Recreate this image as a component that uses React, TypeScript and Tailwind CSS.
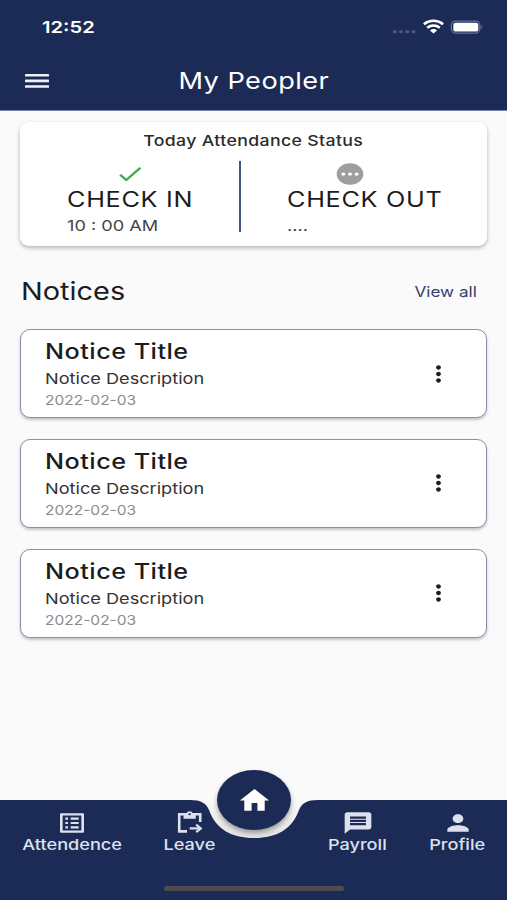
import type { ReactNode } from "react";
import {
    MdCheck,
    MdHome,
    MdListAlt,
    MdMessage,
    MdMoreVert,
    MdPending,
    MdPerson,
} from "react-icons/md";

type Notice = {
    id: number;
    title: string;
    description: string;
    date: string;
};

const notices: Notice[] = [
    { id: 1, title: "Notice Title", description: "Notice Description", date: "2022-02-03" },
    { id: 2, title: "Notice Title", description: "Notice Description", date: "2022-02-03" },
    { id: 3, title: "Notice Title", description: "Notice Description", date: "2022-02-03" },
];

// Wide text, the whole app uses a stretched face
const Wide = ({ className = "", children }: { className?: string; children: ReactNode }) => (
    <span className={`inline-block whitespace-nowrap ${className}`}>{children}</span>
);

const MenuIcon = () => (
    <svg width="24" height="14" viewBox="0 0 24 14" fill="#eef0f8">
        <rect width="24" height="2.6" y="0" rx="0.5" />
        <rect width="24" height="2.6" y="5.6" rx="0.5" />
        <rect width="24" height="2.6" y="11.2" rx="0.5" />
    </svg>
);

const LeaveIcon = () => (
    <svg width="26" height="26" viewBox="0 0 26 26" fill="none">
        <path d="M10 21.4H2.2V4.2H23.2V12" stroke="currentColor" strokeWidth="2.6" />
        <path d="M6.5 3.4H9.6C10 0.4 15.2 0.4 15.6 3.4H18.8V8.7H6.5Z" fill="currentColor" />
        <ellipse cx="12.6" cy="4.2" rx="1.3" ry="1" fill="#1c2b56" />
        <path d="M12.6 18.4H23" stroke="currentColor" strokeWidth="2.2" />
        <path d="M19.2 14.6L23.8 18.4L19.2 22.2" stroke="currentColor" strokeWidth="2.2" />
    </svg>
);

const StatusBar = () => (
    <div className="flex h-[54px] items-center justify-between pl-[42px] pr-[25px] text-white">
        <Wide className="origin-left scale-x-[1.22] text-[16.5px] font-semibold">12:52</Wide>
        <svg width="90" height="18" viewBox="0 0 90 18" fill="none">
            <g fill="#4b5880">
                <ellipse cx="3" cy="13.7" rx="2.1" ry="1.8" />
                <ellipse cx="9" cy="13.7" rx="2.1" ry="1.8" />
                <ellipse cx="15.2" cy="13.7" rx="2.1" ry="1.8" />
                <ellipse cx="21.4" cy="13.7" rx="2.1" ry="1.8" />
            </g>
            <g stroke="#fff" strokeWidth="2.7">
                <path d="M31.9 6.2C37.5 1.6 45.5 1.6 51.1 6.2" />
                <path d="M35.2 9.8C39 6.9 44 6.9 47.8 9.8" />
            </g>
            <path d="M38 12.4C40 10.6 43 10.6 45 12.4L41.5 15.4Z" fill="#fff" />
            <rect x="59.4" y="3.1" width="28.4" height="12" rx="4" stroke="#66719a" strokeWidth="1.2" />
            <rect x="61.3" y="4.8" width="25" height="8.8" rx="2.2" fill="#fff" />
            <path d="M88.9 7.2V11C90.2 10.5 90.2 7.7 88.9 7.2Z" fill="#8088a8" />
        </svg>
    </div>
);

const Header = () => (
    <header className="h-[111px] border-b border-[#7a81a5] bg-[#1c2b56]">
        <StatusBar />
        <div className="grid h-[54px] grid-cols-[74px_1fr_74px] items-center text-white">
            <button type="button" className="pl-[25px]">
                <MenuIcon />
            </button>
            <h1 className="text-center text-[23px] leading-none">
                <Wide className="scale-x-[1.18] tracking-[0.4px]">My Peopler</Wide>
            </h1>
        </div>
    </header>
);

const AttendanceCard = () => (
    <section className="mt-[11px] h-[124px] rounded-[9px] bg-white pt-[10px] shadow-[0_2px_4px_rgba(0,0,0,0.28)]">
        <h2 className="text-center text-[15px] leading-[18px] font-medium text-[#2b2b2b]">
            <Wide className="scale-x-[1.18] tracking-[0.3px]">Today Attendance Status</Wide>
        </h2>
        <div className="flex pt-[11px]">
            <div className="flex w-[219px] flex-col pl-[47px]">
                <MdCheck preserveAspectRatio="none" className="ml-12 h-[26px] w-[30px] text-[#3fab4b]" />
                <Wide className="origin-left scale-x-[1.2] text-[21px] leading-[26px] font-normal tracking-[0.6px]">CHECK IN</Wide>
                <Wide className="origin-left scale-x-[1.21] text-[15px] leading-[26px] text-[#444]">10 : 00 AM</Wide>
            </div>
            <div className="h-[71px] w-[2px] bg-[#40557f]" />
            <div className="flex flex-col pl-[46px]">
                <MdPending preserveAspectRatio="none" className="ml-[47px] h-[26px] w-8 text-[#9e9e9e]" />
                <Wide className="origin-left scale-x-[1.2] text-[21px] leading-[26px] font-normal tracking-[0.6px]">CHECK OUT</Wide>
                <Wide className="origin-left scale-x-[1.21] text-[15px] leading-[26px] text-[#444]">....</Wide>
            </div>
        </div>
    </section>
);

const NoticeCard = ({ notice }: { notice: Notice }) => (
    <li className="flex h-[89px] items-center justify-between rounded-[10px] border-[1.5px] border-[#8b8eac] bg-white pr-[33px] pl-6 shadow-[0_2px_3px_rgba(0,0,0,0.22)]">
        <div className="flex flex-col items-start pt-px">
            <Wide className="origin-left scale-x-[1.2] text-[21px] leading-[28px] font-medium tracking-[0.4px]">{notice.title}</Wide>
            <Wide className="origin-left scale-x-[1.21] text-[15px] leading-[25px] text-[#333]">{notice.description}</Wide>
            <Wide className="origin-left scale-x-[1.15] text-[13.5px] leading-[19px] text-[#8c8c8c]">{notice.date}</Wide>
        </div>
        <button type="button">
            <MdMoreVert preserveAspectRatio="none" className="h-[26px] w-[29px]" />
        </button>
    </li>
);

const NavItem = ({ icon, label }: { icon: ReactNode; label: string }) => (
    <a href="#" className="flex flex-col items-center text-[15px] leading-[17px] font-medium text-[#dde1ee]">
        {icon}
        <Wide className="scale-x-[1.21]">{label}</Wide>
    </a>
);

const BottomNav = () => (
    <nav className="relative h-[101px]">
        <svg className="absolute inset-0" width="507" height="101" viewBox="0 0 507 101">
            <defs>
                <linearGradient id="notch" x1="0" y1="0" x2="0" y2="1">
                    <stop offset="0" stopColor="#fafafa" />
                    <stop offset="1" stopColor="#e2e2e2" />
                </linearGradient>
            </defs>
            <path d="M200 1H308V40H200Z" fill="url(#notch)" />
            <path
                d="M0 1H190C201 1 206 4 209 11C216 30 231 39 254 39C277 39 292 30 299 11C302 4 307 1 318 1H507V101H0Z"
                fill="#1c2b56"
            />
        </svg>
        <div className="relative grid grid-cols-[144px_91px_37px_171px_64px] pt-[11px]">
            <NavItem label="Attendence" icon={<MdListAlt preserveAspectRatio="none" className="h-[26px] w-8" />} />
            <NavItem label="Leave" icon={<LeaveIcon />} />
            <span />
            <NavItem label="Payroll" icon={<MdMessage preserveAspectRatio="none" className="h-[26px] w-8" />} />
            <div className="-ml-[36px] w-[101px]">
                <NavItem label="Profile" icon={<MdPerson preserveAspectRatio="none" className="h-[26px] w-8" />} />
            </div>
        </div>
        <button
            type="button"
            className="absolute -top-[29px] left-[217px] flex h-[60px] w-[74px] items-center justify-center rounded-[50%] bg-[#1c2b56] text-white shadow-[0_3px_5px_rgba(0,0,0,0.35)]"
        >
            <MdHome preserveAspectRatio="none" className="h-[31px] w-[35px]" />
        </button>
        <div className="absolute bottom-[9px] left-[164px] h-[5px] w-[180px] rounded-full bg-[#4d4d50]" />
    </nav>
);

export default function App() {
    return (
        <div className="flex h-[900px] w-[507px] flex-col overflow-hidden bg-[#fafafa] font-['Inter','Liberation_Sans',sans-serif] text-[#1c1c1c]">
            <Header />
            <main className="flex-1 px-5">
                <AttendanceCard />
                <div className="flex h-[83px] items-center justify-between pt-[7px] pr-[10px]">
                    <h2 className="pl-px text-[24.5px]">
                        <Wide className="origin-left scale-x-[1.18]">Notices</Wide>
                    </h2>
                    <a href="#" className="pt-[2px] text-[14.5px] text-[#37406f]">
                        <Wide className="origin-right scale-x-[1.18]">View all</Wide>
                    </a>
                </div>
                <ul className="flex flex-col gap-[20.9px]">
                    {notices.map((notice) => (
                        <NoticeCard key={notice.id} notice={notice} />
                    ))}
                </ul>
            </main>
            <BottomNav />
        </div>
    );
}
